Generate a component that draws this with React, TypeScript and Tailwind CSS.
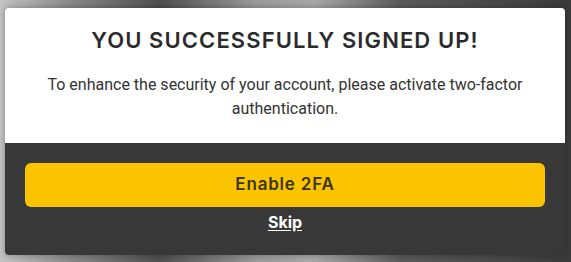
import React from "react";

export default function App() {
  return (
    <div className="relative w-[571px] h-[262px] overflow-hidden bg-[linear-gradient(90deg,#c4c4c4_0%,#8a8a8a_12%,#4e4e4e_28%,#9a9a9a_45%,#a8a8a8_55%,#5a5a5a_70%,#4a4a4a_85%,#3a3a3a_100%)]">
      <div className="pt-[8px] pl-[5px]">
        <div className="w-[560px] h-[247px] rounded-[4px] overflow-hidden flex flex-col shadow-[0_0_6px_rgba(0,0,0,0.3)]">
          <div className="bg-white h-[135px] flex flex-col items-center pt-[18px]">
            <h1 className="font-['Inter',sans-serif] font-semibold text-[22px] leading-[28px] text-[#2b2b2b] tracking-[1.1px]">
              YOU SUCCESSFULLY SIGNED UP!
            </h1>
            <p className="mt-[19px] px-[30px] text-center font-['Roboto',sans-serif] text-[16px] leading-[24px] text-[#333333]">
              To enhance the security of your account, please activate two-factor authentication.
            </p>
          </div>
          <div className="bg-[#383838] flex-1 flex flex-col px-[20px] pt-[20px]">
            <button className="h-[44px] w-full rounded-[6px] bg-[#fcc400] font-['Inter',sans-serif] font-semibold text-[17px] tracking-[0.8px] text-[#3b3514]">
              Enable 2FA
            </button>
            <a className="self-center mt-[5px] font-['Inter',sans-serif] font-bold text-[16px] leading-[20px] text-white underline underline-offset-2">
              Skip
            </a>
          </div>
        </div>
      </div>
    </div>
  );
}
